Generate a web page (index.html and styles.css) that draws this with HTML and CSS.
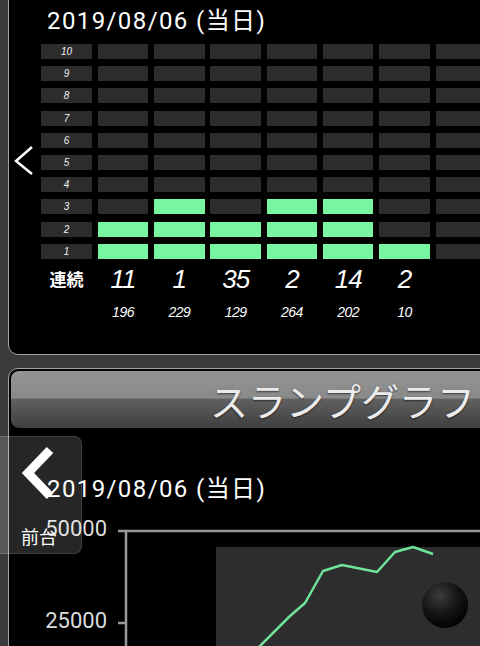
FILE: index.html
```html
<!DOCTYPE html>
<html lang="ja">
<head>
  <meta charset="UTF-8" />
  <meta name="viewport" content="width=device-width, initial-scale=1.0" />
  <title>スランプグラフ</title>
  <link rel="stylesheet" href="styles.css">
</head>
<body>
  <section class="panel lamp-panel">
    <h2 class="date">2019/08/06 (当日)</h2>
    <div class="lamp">
      <div class="prev-day">
        <svg width="20" height="31" viewBox="0 0 20 31"><polyline points="18,2 2,16 18,29" /></svg>
      </div>
      <div class="lamp-body">
        <div class="board">
          <div class="cell level">10</div><div class="cell"></div><div class="cell"></div><div class="cell"></div><div class="cell"></div><div class="cell"></div><div class="cell"></div><div class="cell"></div>
          <div class="cell level">9</div><div class="cell"></div><div class="cell"></div><div class="cell"></div><div class="cell"></div><div class="cell"></div><div class="cell"></div><div class="cell"></div>
          <div class="cell level">8</div><div class="cell"></div><div class="cell"></div><div class="cell"></div><div class="cell"></div><div class="cell"></div><div class="cell"></div><div class="cell"></div>
          <div class="cell level">7</div><div class="cell"></div><div class="cell"></div><div class="cell"></div><div class="cell"></div><div class="cell"></div><div class="cell"></div><div class="cell"></div>
          <div class="cell level">6</div><div class="cell"></div><div class="cell"></div><div class="cell"></div><div class="cell"></div><div class="cell"></div><div class="cell"></div><div class="cell"></div>
          <div class="cell level">5</div><div class="cell"></div><div class="cell"></div><div class="cell"></div><div class="cell"></div><div class="cell"></div><div class="cell"></div><div class="cell"></div>
          <div class="cell level">4</div><div class="cell"></div><div class="cell"></div><div class="cell"></div><div class="cell"></div><div class="cell"></div><div class="cell"></div><div class="cell"></div>
          <div class="cell level">3</div><div class="cell"></div><div class="cell on"></div><div class="cell"></div><div class="cell on"></div><div class="cell on"></div><div class="cell"></div><div class="cell"></div>
          <div class="cell level">2</div><div class="cell on"></div><div class="cell on"></div><div class="cell on"></div><div class="cell on"></div><div class="cell on"></div><div class="cell"></div><div class="cell"></div>
          <div class="cell level">1</div><div class="cell on"></div><div class="cell on"></div><div class="cell on"></div><div class="cell on"></div><div class="cell on"></div><div class="cell on"></div><div class="cell"></div>
        </div>
        <div class="counts big">
          <div class="label">連続</div>
          <div>11</div><div>1</div><div>35</div><div>2</div><div>14</div><div>2</div><div></div>
        </div>
        <div class="counts small">
          <div></div>
          <div>196</div><div>229</div><div>129</div><div>264</div><div>202</div><div>10</div><div></div>
        </div>
      </div>
    </div>
  </section>

  <section class="panel graph-panel">
    <div class="graph-head">スランプグラフ</div>
    <h2 class="date">2019/08/06 (当日)</h2>
    <svg class="graph" width="480" height="150" viewBox="9 503 480 150">
      <defs>
        <radialGradient id="ball" cx="0.38" cy="0.3" r="0.75">
          <stop offset="0" stop-color="#3c3c3c" />
          <stop offset="0.55" stop-color="#141414" />
          <stop offset="1" stop-color="#000" />
        </radialGradient>
      </defs>
      <text x="107" y="536" class="axis-label">50000</text>
      <text x="107" y="628" class="axis-label">25000</text>
      <rect x="216" y="547" width="300" height="120" fill="#2d2d2d" />
      <line x1="118" y1="531" x2="126" y2="531" class="axis" />
      <line x1="118" y1="623" x2="126" y2="623" class="axis" />
      <line x1="126" y1="530" x2="126" y2="660" class="axis" />
      <line x1="125" y1="531" x2="500" y2="531" class="axis" />
      <polyline class="line" points="258,648 290,616 305,603 323,571 342,565 377,572 395,552 413,547 433,554" />
      <circle cx="445" cy="605" r="23" fill="url(#ball)" />
    </svg>
  </section>

  <div class="prev-float">
    <svg width="40" height="56" viewBox="0 0 40 56"><polyline points="33,5 11,28 33,51" /></svg>
    <span>前台</span>
  </div>
</body>
</html>
```

FILE: styles.css
```css
html, body {
  margin: 0;
}
body {
  position: relative;
  width: 480px;
  height: 646px;
  overflow: hidden;
  background: #3b3b3b;
  color: #fff;
  font-family: Roboto, "Noto Sans CJK JP", sans-serif;
}
.panel {
  box-sizing: border-box;
  width: 669px;
  margin-left: 8px;
  background: #000;
  border: 1px solid #a3a3a3;
  border-radius: 10px;
}
.date {
  margin: 0 0 0 38px;
  font-size: 24px;
  line-height: 28px;
  font-weight: 400;
  letter-spacing: 1.4px;
}

/* lamp board */
.lamp-panel {
  margin-top: -12px;
  padding: 18px 0 34px;
}
.lamp {
  display: flex;
  margin-top: 9px;
}
.prev-day {
  box-sizing: border-box;
  width: 32px;
  padding: 101px 0 0 5px;
}
.prev-day polyline {
  fill: none;
  stroke: #fff;
  stroke-width: 2.5;
}
.board,
.counts {
  display: grid;
  grid-template-columns: 51px repeat(7, 50.5px);
  column-gap: 5.8px;
}
.board {
  grid-auto-rows: 15px;
  row-gap: 7.2px;
}
.cell {
  background: #2c2c2c;
}
.cell.on {
  background: #78f5a0;
}
.cell.level {
  font: italic 10px/15px "Liberation Sans", sans-serif;
  text-align: center;
  color: #eee;
}
.counts {
  text-align: center;
  align-items: center;
}
.counts.big {
  margin-top: 6px;
  font: italic 26px/28px "Liberation Sans", sans-serif;
  letter-spacing: -1px;
}
.counts.small {
  margin-top: 11.5px;
  font: italic 14px/16px "Liberation Sans", sans-serif;
  letter-spacing: -0.5px;
}
.counts .label {
  font: bold 17px/28px "Noto Sans CJK JP", sans-serif;
  letter-spacing: 0;
}

/* slump graph */
.graph-panel {
  margin-top: 12.5px;
  padding-top: 2px;
  height: 400px;
}
.graph-head {
  height: 57px;
  margin: 0 2px;
  border-radius: 8px;
  background: linear-gradient(to bottom, #939393 0%, #8a8a8a 47%, #606060 50%, #3f3f3f 100%);
  color: #ececec;
  font: 38px/57px "Noto Sans CJK JP", sans-serif;
  text-align: center;
  text-shadow: 0 1px 2px rgba(0,0,0,0.6);
}
.graph-panel .date {
  margin-top: 47px;
}
.graph {
  display: block;
}
.axis-label {
  font: 22px Roboto, sans-serif;
  fill: #ddd;
  text-anchor: end;
}
.axis {
  stroke: #999;
  stroke-width: 2.5;
}
.line {
  fill: none;
  stroke: #6fe39a;
  stroke-width: 2.5;
  stroke-linejoin: round;
}

/* floating previous button */
.prev-float {
  position: absolute;
  left: 0;
  top: 436px;
  box-sizing: border-box;
  width: 82px;
  height: 118px;
  padding-top: 8px;
  background: rgba(255,255,255,0.15);
  border: 1px solid rgba(255,255,255,0.12);
  border-left: none;
  border-radius: 0 8px 8px 0;
}
.prev-float svg {
  display: block;
  margin-left: 17px;
}
.prev-float polyline {
  fill: none;
  stroke: #fff;
  stroke-width: 9;
}
.prev-float span {
  display: block;
  margin: 25px 0 0 21px;
  font: 18px/20px "Noto Sans CJK JP", sans-serif;
}
```
